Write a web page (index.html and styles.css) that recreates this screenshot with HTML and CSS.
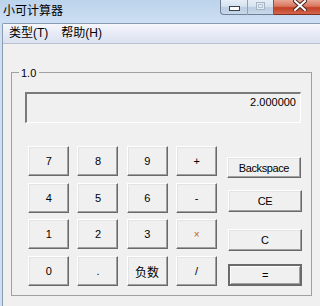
FILE: index.html
```html
<!DOCTYPE html>
<html lang="zh">
<head>
<meta charset="utf-8">
<title>小可计算器</title>
<link rel="stylesheet" href="styles.css">
</head>
<body>
<div class="window">
  <div class="titlebar">
    <div class="title">小可计算器</div>
    <div class="caption">
      <div class="cap cap-min">
        <svg width="11" height="5" viewBox="0 0 11 5"><rect x="0.5" y="0.5" width="10" height="4" fill="#fff" stroke="#39434f"/></svg>
      </div>
      <div class="cap cap-max">
        <svg width="9" height="8" viewBox="0 0 9 8"><rect x="0.5" y="0.5" width="8" height="7" fill="#e2eaf4" stroke="#a6b4c4"/><rect x="2.5" y="2.5" width="4" height="3" fill="none" stroke="#b8c4d2"/></svg>
      </div>
      <div class="cap cap-close">
        <svg width="14" height="11" viewBox="0 0 14 11"><path d="M2 1 L12 10 M12 1 L2 10" stroke="#4a2a26" stroke-width="4" stroke-linecap="square"/><path d="M2 1 L12 10 M12 1 L2 10" stroke="#fff" stroke-width="2" stroke-linecap="square"/></svg>
      </div>
    </div>
  </div>
  <div class="frame">
    <div class="client">
      <div class="menubar">
        <span class="menu-item">类型(T)</span>
        <span class="menu-item">帮助(H)</span>
      </div>
      <div class="group">
        <span class="legend">1.0</span>
        <div class="display">2.000000</div>
        <div class="keypad">
          <div class="keys">
            <button class="btn">7</button>
            <button class="btn">8</button>
            <button class="btn">9</button>
            <button class="btn">+</button>
            <button class="btn">4</button>
            <button class="btn">5</button>
            <button class="btn">6</button>
            <button class="btn">-</button>
            <button class="btn">1</button>
            <button class="btn">2</button>
            <button class="btn">3</button>
            <button class="btn btn-mul">×</button>
            <button class="btn">0</button>
            <button class="btn">.</button>
            <button class="btn btn-cjk">负数</button>
            <button class="btn">/</button>
          </div>
          <div class="side">
            <button class="btn side-btn side-back">Backspace</button>
            <button class="btn side-btn side-ce">CE</button>
            <button class="btn side-btn side-c">C</button>
            <button class="btn side-btn side-eq btn-default">=</button>
          </div>
        </div>
      </div>
    </div>
  </div>
</div>
</body>
</html>
```

FILE: styles.css
```css
html, body {
  margin: 0;
  padding: 0;
}
body {
  width: 320px;
  height: 306px;
  overflow: hidden;
  font-family: "Liberation Sans", "Noto Sans CJK SC", sans-serif;
  font-size: 11px;
  color: #000;
}
.window {
  width: 320px;
  height: 306px;
  display: flex;
  flex-direction: column;
  background: #cfdff1;
}
.titlebar {
  height: 23px;
  display: flex;
  background: linear-gradient(#bcd3ec, #cddff2);
}
.title {
  padding: 2px 0 0 3px;
  font-size: 12px;
  line-height: 16px;
  font-family: "Noto Sans CJK SC", sans-serif;
  color: #000;
}
.caption {
  margin-left: auto;
  display: flex;
  align-self: flex-start;
  height: 15px;
  width: 100px;
}
.cap {
  height: 15px;
  box-sizing: border-box;
  display: flex;
  align-items: center;
  justify-content: center;
  border-bottom: 1px solid #6f8197;
}
.cap-min {
  width: 28px;
  border-left: 1px solid #6f8197;
  border-bottom-left-radius: 4px;
  border-right: 1px solid #8fa1b6;
  background: linear-gradient(#e6eef7 0%, #d6e2f0 45%, #bccde2 55%, #c9d8ea 100%);
  padding-top: 3px;
}
.cap-max {
  width: 26px;
  border-right: 1px solid #7d5a52;
  background: linear-gradient(#e6eef7 0%, #d6e2f0 45%, #bccde2 55%, #c9d8ea 100%);
  padding-bottom: 3px;
}
.cap-close {
  flex: 1;
  background: linear-gradient(#e8a896 0%, #d9755e 45%, #c43f25 55%, #d2674c 100%);
  border-bottom-color: #7a3325;
  justify-content: flex-start;
  padding-left: 19px;
  padding-bottom: 3px;
}
.frame {
  flex: 1;
  display: flex;
}
.client {
  flex: 1;
  margin-left: 2px;
  border-left: 1px solid #8a9cb2;
  border-top: 1px solid #8a9cb2;
  border-top-left-radius: 2px;
  background: #f0f0f0;
  display: flex;
  flex-direction: column;
}
.menubar {
  height: 19px;
  border-bottom: 1px solid #b9c0d2;
  background: linear-gradient(#f6f7fc, #e4e8f4 60%, #dde2f0);
  display: flex;
  align-items: center;
  font-size: 12px;
}
.menu-item {
  padding: 0 7px 0 6px;
  line-height: 19px;
}
.group {
  position: relative;
  margin: 28px 0 0 8px;
  width: 301px;
  height: 224px;
  box-sizing: border-box;
  border: 1px solid #a0a0a0;
  padding: 19px 0 0 13px;
}
.legend {
  position: absolute;
  top: -6px;
  left: 7px;
  padding: 0 3px 0 2px;
  background: #f0f0f0;
  line-height: 13px;
}
.display {
  width: 276px;
  height: 31px;
  box-sizing: border-box;
  border-style: solid;
  border-width: 2px 1px 1px 2px;
  border-color: #7a7a7a #ffffff #ffffff #7a7a7a;
  padding: 2px 4px 0 0;
  text-align: right;
  line-height: 13px;
}
.keypad {
  display: flex;
  margin: 23px 0 0 3px;
}
.keys {
  display: grid;
  grid-template-columns: repeat(4, 41px);
  grid-template-rows: repeat(4, 30px);
  column-gap: 8.3px;
  row-gap: 6.7px;
}
.btn {
  margin: 0;
  padding: 0;
  box-sizing: border-box;
  background: #f0f0f0;
  border: 1px solid;
  border-color: #ffffff #696969 #696969 #ffffff;
  box-shadow: inset -1px -1px 0 #a0a0a0, inset 1px 1px 0 #e3e3e3;
  font-family: "Liberation Sans", "Noto Sans CJK SC", sans-serif;
  font-size: 11px;
  letter-spacing: -0.4px;
  color: #000;
  display: flex;
  align-items: center;
  justify-content: center;
}
.btn-mul {
  color: #b8621e;
  font-size: 10px;
}
.btn-cjk {
  font-family: "Noto Sans CJK SC", sans-serif;
  font-size: 12px;
  letter-spacing: 0;
}
.side {
  display: flex;
  flex-direction: column;
  margin-left: 10px;
  padding-top: 11px;
}
.side-btn {
  width: 74px;
  height: 22px;
}
.side-back {
  height: 21px;
}
.side-ce {
  margin: 12px 0 0 1px;
}
.side-c {
  margin: 17px 0 0 1px;
}
.side-eq {
  margin: 13px 0 0 1px;
}
.btn-default {
  border: 2px solid #6a6a6a;
  box-shadow: inset 1px 1px 0 #ffffff, inset -1px -1px 0 #a0a0a0;
}
```
